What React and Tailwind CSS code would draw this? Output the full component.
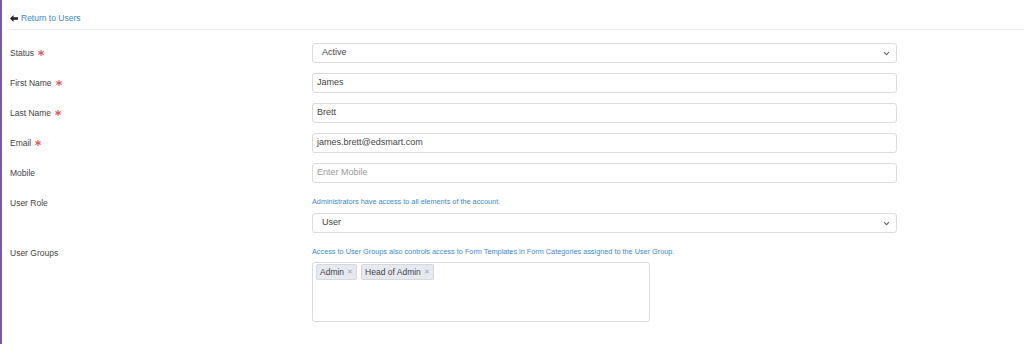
import React from 'react';

const font = { fontFamily: '"Liberation Sans", Arial, sans-serif' };

const Star = () => (
  <svg width="6" height="6" viewBox="0 0 6 6" className="ml-[4px] text-[#e5535b]">
    <g stroke="currentColor" strokeWidth="1.1" strokeLinecap="round">
      <path d="M3 0.4 V5.6" />
      <path d="M0.75 1.7 L5.25 4.3" />
      <path d="M0.75 4.3 L5.25 1.7" />
    </g>
  </svg>
);

const Label = ({ text, required }) => (
  <div className="flex h-[20px] w-[302px] shrink-0 items-center text-[8.5px] text-[#444]">
    <span>{text}</span>
    {required && <Star />}
  </div>
);

const Chevron = () => (
  <svg width="7" height="5" viewBox="0 0 7 5" className="text-[#666]">
    <path d="M1 1.2 L3.5 3.7 L6 1.2" fill="none" stroke="currentColor" strokeWidth="1.2" />
  </svg>
);

const Select = ({ value }) => (
  <div className="flex h-[20px] w-[585px] items-center justify-between rounded-[3px] border border-[#dcdcdc] bg-white pl-[9px] pr-[6px] text-[9px] text-[#444]">
    <span>{value}</span>
    <Chevron />
  </div>
);

const Input = ({ value, placeholder }) => (
  <div className="flex h-[20px] w-[585px] items-center rounded-[3px] border border-[#dcdcdc] bg-white px-[4px] text-[9px]">
    {value ? <span className="text-[#444]">{value}</span> : <span className="text-[#9a9a9a]">{placeholder}</span>}
  </div>
);

const Help = ({ children }) => (
  <p className="text-[7.3px] leading-[17px] text-[#3b8ad0]">{children}</p>
);

const Tag = ({ text }) => (
  <span className="flex h-[16px] items-center gap-[3px] rounded-[2px] border border-[#d3d9e1] bg-[#e6eaf0] px-[3px] text-[8.5px] text-[#444]">
    {text}
    <span className="text-[6.5px] text-[#a0a6ad]">✕</span>
  </span>
);

export default function App() {
  return (
    <div style={font} className="h-[344px] w-full border-l-2 border-[#7a5aa8] bg-white">
      {/* Header */}
      <div className="ml-[8px] flex h-[30px] items-start border-b border-[#ececec] pt-[12px]">
        <div className="flex items-center gap-[3px] leading-[12px]">
          <svg width="8" height="7" viewBox="0 0 8 7" className="text-[#222]">
            <path d="M0 3.5 L3.5 0 L3.5 2.3 L8 2.3 L8 4.7 L3.5 4.7 L3.5 7 Z" fill="currentColor" />
          </svg>
          <span className="text-[8.5px] text-[#3b8ad0]">Return to Users</span>
        </div>
      </div>

      {/* Form */}
      <div className="ml-[8px] flex flex-col gap-[10px] pt-[13px]">
        <div className="flex">
          <Label text="Status" required />
          <Select value="Active" />
        </div>
        <div className="flex">
          <Label text="First Name" required />
          <Input value="James" />
        </div>
        <div className="flex">
          <Label text="Last Name" required />
          <Input value="Brett" />
        </div>
        <div className="flex">
          <Label text="Email" required />
          <Input value="james.brett@edsmart.com" />
        </div>
        <div className="flex">
          <Label text="Mobile" />
          <Input placeholder="Enter Mobile" />
        </div>
        <div className="flex">
          <Label text="User Role" />
          <div className="flex flex-col gap-[3px]">
            <Help>Administrators have access to all elements of the account.</Help>
            <Select value="User" />
          </div>
        </div>
        <div className="flex">
          <Label text="User Groups" />
          <div className="flex flex-col gap-[2px]">
            <Help>Access to User Groups also controls access to Form Templates in Form Categories assigned to the User Group.</Help>
            <div className="flex h-[60px] w-[338px] items-start gap-[4px] rounded-[3px] border border-[#dcdcdc] bg-white pl-[3px] pt-[1px]">
              <Tag text="Admin" />
              <Tag text="Head of Admin" />
            </div>
          </div>
        </div>
      </div>
    </div>
  );
}
